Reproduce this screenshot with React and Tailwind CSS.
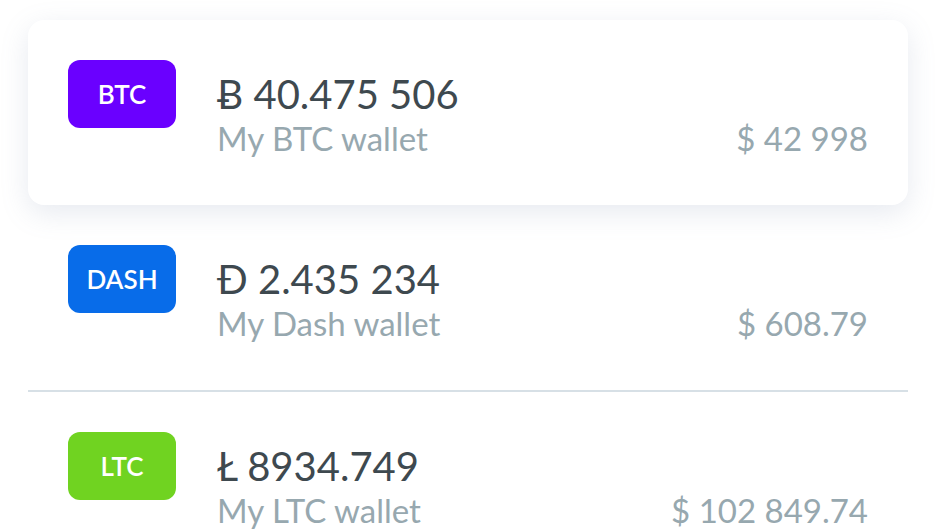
const wallets = [
  { code: 'BTC', badge: 'bg-[#6a00ff]', amount: 'Ƀ 40.475 506', name: 'My BTC wallet', usd: '$ 42 998', active: true },
  { code: 'DASH', badge: 'bg-[#086ce9]', amount: 'Đ 2.435 234', name: 'My Dash wallet', usd: '$ 608.79' },
  { code: 'LTC', badge: 'bg-[#70d321]', amount: 'Ł 8934.749', name: 'My LTC wallet', usd: '$ 102 849.74' },
];

function WalletRow({ wallet }) {
  return (
    <div
      className={
        wallet.active
          ? 'flex h-[185px] gap-[41px] rounded-2xl bg-white p-10 shadow-[0_8px_28px_rgba(120,140,170,0.18)]'
          : 'flex h-[185px] gap-[41px] p-10'
      }
    >
      <div
        className={`flex h-[68px] w-[108px] shrink-0 items-center justify-center rounded-xl text-[26px] font-semibold text-white ${wallet.badge}`}
      >
        {wallet.code}
      </div>
      <div className="flex flex-1 flex-col pt-[14px]">
        <div className="text-[40px] leading-[40px] text-[#3e494f]">{wallet.amount}</div>
        <div className="mt-[4px] flex items-baseline justify-between text-[33px] leading-[40px] text-[#97a8af]">
          <span>{wallet.name}</span>
          <span>{wallet.usd}</span>
        </div>
      </div>
    </div>
  );
}

export default function App() {
  return (
    <div className="h-[532px] w-[936px] overflow-hidden bg-white px-[28px] pt-5 font-['Lato',sans-serif]">
      <WalletRow wallet={wallets[0]} />
      <WalletRow wallet={wallets[1]} />
      <div className="h-[2px] bg-[#d7e0e6]" />
      <WalletRow wallet={wallets[2]} />
    </div>
  );
}
